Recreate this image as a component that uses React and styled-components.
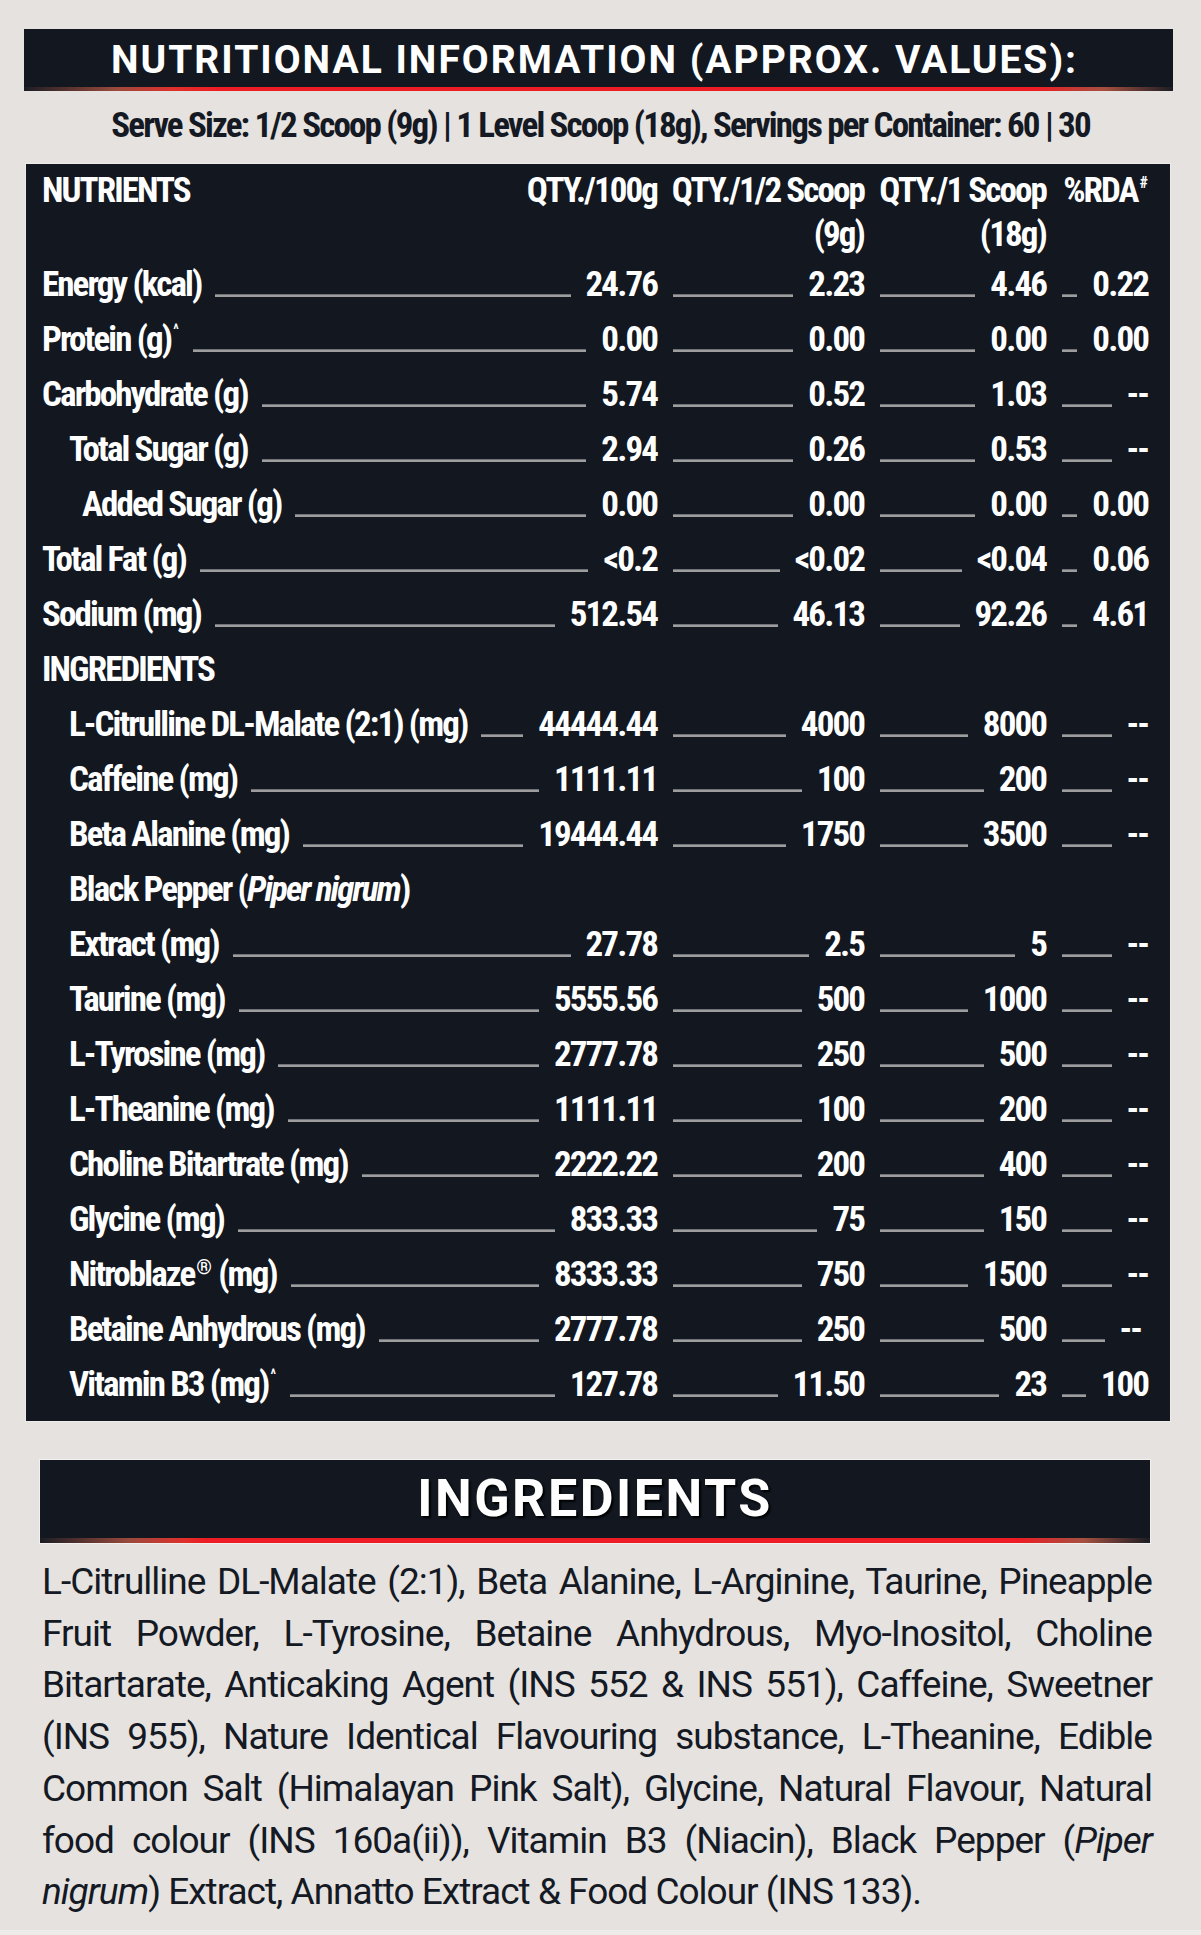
import React from "react";
import styled, { createGlobalStyle } from "styled-components";

const COND = `"Roboto Condensed", "Roboto", "Liberation Sans", sans-serif`;
const SANS = `"Roboto", "Liberation Sans", sans-serif`;
const DARK = "#121720";
const INK = "#141923";

const Global = createGlobalStyle`
  html, body { margin: 0; padding: 0; }
  body { background: #eeeceb; }
  #root { width: 1201px; }
`;

const Page = styled.div`
  width: 1201px;
  min-height: 1930px;
  background: #e5e2e0;
  padding-top: 29px;
  box-sizing: border-box;
  overflow: hidden;
`;

const redLine = (stops) => `linear-gradient(90deg, ${stops})`;

const TitleBar = styled.h1`
  margin: 0 28px 0 24px;
  height: 62px;
  background: ${redLine(
    "#1b1d24 0%, #9a4a3c 8%, #e0302c 13%, #ee1c24 17%, #ee1c24 88%, #a55040 94%, #1b1d24 100%"
  )} bottom / 100% 4px no-repeat, ${DARK};
  color: #fff;
  font-family: ${SANS};
  font-weight: 700;
  font-size: 39px;
  letter-spacing: 2px;
  line-height: 62px;
  text-align: center;
  padding-right: 8px;
`;

const ServeLine = styled.p`
  margin: 13px 0 16px;
  font-family: ${COND};
  font-stretch: 75%;
  font-weight: 700;
  font-size: 35px;
  letter-spacing: -1.85px;
  line-height: 44px;
  color: ${INK};
  text-align: center;
`;

const Panel = styled.section`
  margin: 0 31px 0 26px;
  background: ${DARK};
  box-shadow: 0 0 0 1px rgba(255, 255, 255, 0.35);
  padding: 5px 22px 9px 16px;
  color: #fff;
  font-family: ${COND};
  font-stretch: 75%;
  font-weight: 700;
  font-size: 35px;
  letter-spacing: -1.9px;
`;

const COLS = "615px 207px 182px 102px";

const HeadRow = styled.div`
  display: grid;
  grid-template-columns: ${COLS};
  line-height: 44px;
`;

const HeadCell = styled.div`
  display: flex;
  justify-content: ${(p) => (p.$split ? "space-between" : "flex-end")};
  text-align: right;
  white-space: nowrap;
`;

const Row = styled.div`
  display: grid;
  grid-template-columns: ${COLS};
  height: 55px;
  line-height: 55px;
`;

const LabelCell = styled.div`
  grid-column: ${(p) => (p.$span ? "1 / -1" : "1")};
  display: flex;
  align-items: flex-end;
  padding-left: ${(p) => p.$indent || 0}px;
  white-space: nowrap;
`;

const ValueCell = styled.div`
  display: flex;
  align-items: flex-end;
  white-space: nowrap;
`;

const Leader = styled.span`
  flex: 1;
  height: 3px;
  background: #9d9d9d;
  border-top: 1px solid #6f7278;
  box-sizing: border-box;
  margin: 0 15px 15px ${(p) => (p.$first ? 14 : 16)}px;
`;

const Value = styled.span`
  margin-right: ${(p) => p.$nudge || 0}px;
`;

const Sup = styled.sup`
  font-size: ${(p) => p.$size || 14}px;
  line-height: 0;
  vertical-align: ${(p) => p.$raise || 17}px;
  margin-left: 2px;
  letter-spacing: 0;
  font-weight: 700;
`;

const Ital = styled.i`
  font-style: italic;
`;

const SubHeader = styled.div`
  margin: 39px 51px 0 40px;
  height: 83px;
  box-sizing: border-box;
  padding-bottom: 5px;
  background: ${redLine(
    "#1b1d24 0%, #9a4a3c 8%, #e0302c 13%, #ee1c24 15%, #ee1c24 88%, #a55040 94%, #1b1d24 100%"
  )} bottom / 100% 5px no-repeat, ${DARK};
  box-shadow: 0 0 0 1px rgba(255, 255, 255, 0.5);
  color: #fff;
  font-family: ${SANS};
  font-weight: 700;
  font-size: 52px;
  letter-spacing: 2.5px;
  line-height: 78px;
  text-align: center;
  text-shadow: 2px 2px 2px #000;
`;

const Para = styled.div`
  margin: 13px 49px 0 42px;
  font-family: ${SANS};
  font-weight: 400;
  font-size: 37px;
  letter-spacing: -1px;
  line-height: 51.7px;
  color: ${INK};
`;

const Line = styled.span`
  display: block;
  text-align: justify;
  text-align-last: ${(p) => (p.$last ? "left" : "justify")};
`;

const rows = [
  { label: "Energy (kcal)", v: ["24.76", "2.23", "4.46", "0.22"] },
  { label: "Protein (g)", sup: "^", v: ["0.00", "0.00", "0.00", "0.00"] },
  { label: "Carbohydrate (g)", v: ["5.74", "0.52", "1.03", "--"] },
  { label: "Total Sugar (g)", indent: 27, v: ["2.94", "0.26", "0.53", "--"] },
  { label: "Added Sugar (g)", indent: 40, v: ["0.00", "0.00", "0.00", "0.00"] },
  { label: "Total Fat (g)", v: ["<0.2", "<0.02", "<0.04", "0.06"] },
  { label: "Sodium (mg)", v: ["512.54", "46.13", "92.26", "4.61"] },
  { label: "INGREDIENTS" },
  { label: "L-Citrulline DL-Malate (2:1) (mg)", indent: 27, v: ["44444.44", "4000", "8000", "--"] },
  { label: "Caffeine (mg)", indent: 27, v: ["1111.11", "100", "200", "--"] },
  { label: "Beta Alanine (mg)", indent: 27, v: ["19444.44", "1750", "3500", "--"] },
  {
    label: (
      <>
        Black Pepper (<Ital>Piper nigrum</Ital>)
      </>
    ),
    indent: 27,
  },
  { label: "Extract (mg)", indent: 27, v: ["27.78", "2.5", "5", "--"] },
  { label: "Taurine (mg)", indent: 27, v: ["5555.56", "500", "1000", "--"] },
  { label: "L-Tyrosine (mg)", indent: 27, v: ["2777.78", "250", "500", "--"] },
  { label: "L-Theanine (mg)", indent: 27, v: ["1111.11", "100", "200", "--"] },
  { label: "Choline Bitartrate (mg)", indent: 27, v: ["2222.22", "200", "400", "--"] },
  { label: "Glycine (mg)", indent: 27, v: ["833.33", "75", "150", "--"] },
  {
    label: (
      <>
        Nitroblaze<Sup $size={20} $raise={12}>®</Sup> (mg)
      </>
    ),
    indent: 27,
    v: ["8333.33", "750", "1500", "--"],
  },
  { label: "Betaine Anhydrous (mg)", indent: 27, v: ["2777.78", "250", "500", "--"], nudge: 7 },
  { label: "Vitamin B3 (mg)", sup: "^", indent: 27, v: ["127.78", "11.50", "23", "100"] },
];

function DataRow({ r }) {
  const has = !!r.v;
  return (
    <Row>
      <LabelCell $indent={r.indent} $span={!has}>
        <span>
          {r.label}
          {r.sup && <Sup>{r.sup}</Sup>}
        </span>
        {has && <Leader $first />}
        {has && <Value>{r.v[0]}</Value>}
      </LabelCell>
      {has &&
        r.v.slice(1).map((val, i) => (
          <ValueCell key={i}>
            <Leader />
            <Value $nudge={i === 2 ? r.nudge : 0}>{val}</Value>
          </ValueCell>
        ))}
    </Row>
  );
}

const lines = [
  "L-Citrulline DL-Malate (2:1), Beta Alanine, L-Arginine, Taurine, Pineapple",
  "Fruit Powder, L-Tyrosine, Betaine Anhydrous, Myo-Inositol, Choline",
  "Bitartarate, Anticaking Agent (INS 552 & INS 551), Caffeine, Sweetner",
  "(INS 955), Nature Identical Flavouring substance,  L-Theanine, Edible",
  "Common Salt (Himalayan Pink Salt), Glycine, Natural Flavour, Natural",
];

export default function App() {
  return (
    <Page>
      <Global />
      <TitleBar>NUTRITIONAL INFORMATION (APPROX. VALUES):</TitleBar>
      <ServeLine>
        Serve Size: 1/2 Scoop (9g) | 1 Level Scoop (18g), Servings per Container: 60 | 30
      </ServeLine>
      <Panel>
        <HeadRow>
          <HeadCell $split>
            <span>NUTRIENTS</span>
            <span>QTY./100g</span>
          </HeadCell>
          <HeadCell>
            <span>
              QTY./1/2 Scoop
              <br />
              (9g)
            </span>
          </HeadCell>
          <HeadCell>
            <span>
              QTY./1 Scoop
              <br />
              (18g)
            </span>
          </HeadCell>
          <HeadCell>
            <span>
              %RDA<Sup $size={16} $raise={14}>#</Sup>
            </span>
          </HeadCell>
        </HeadRow>
        {rows.map((r, i) => (
          <DataRow key={i} r={r} />
        ))}
      </Panel>
      <SubHeader>INGREDIENTS</SubHeader>
      <Para>
        {lines.map((l, i) => (
          <Line key={i}>{l}</Line>
        ))}
        <Line>
          food colour (INS 160a(ii)), Vitamin B3 (Niacin), Black Pepper (<Ital>Piper</Ital>
        </Line>
        <Line $last>
          <Ital>nigrum</Ital>) Extract, Annatto Extract &amp; Food Colour (INS 133).
        </Line>
      </Para>
    </Page>
  );
}
